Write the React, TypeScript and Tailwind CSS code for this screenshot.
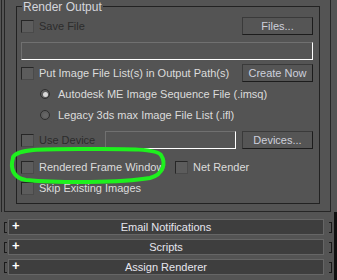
import React from "react";

function Check({ className = "" }: { className?: string }) {
  return (
    <div
      className={`w-[13px] h-[13px] shrink-0 border border-t-[#262626] border-l-[#262626] border-b-[#4a4a4a] border-r-[#4a4a4a] bg-[#5c5c5c] ${className}`}
    />
  );
}

function Radio({ on }: { on?: boolean }) {
  return (
    <div className="w-[10px] h-[10px] shrink-0 rounded-full border border-[#2e2e2e] bg-[#5e5e5e] flex items-center justify-center">
      {on ? <div className="w-[5px] h-[5px] rounded-full bg-[#d8d8d8]" /> : <div className="w-[5px] h-[5px] rounded-full bg-[#666]" />}
    </div>
  );
}

function Btn({ children, w }: { children: React.ReactNode; w: string }) {
  return (
    <div
      className={`${w} h-[18px] flex items-center justify-center border border-t-[#3a3a3a] border-l-[#3a3a3a] border-b-[#1c1c1c] border-r-[#1c1c1c] bg-[#555] text-[#cdd0dc] text-[11px]`}
    >
      {children}
    </div>
  );
}

function Rollout({ title }: { title: string }) {
  return (
    <div className="flex items-center h-[16px]">
      <div className="w-[4px]" />
      <div className="w-[3px] h-[11px] border border-r-0 border-[#1a1a1a]" />
      <div className="w-[1px]" />
      <div className="relative w-[316px] h-[16px] border border-[#666] bg-[#3e3e3e] flex items-center justify-center text-[#e6e6ee] text-[11px]">
        <span className="absolute left-[3px] top-[-1px] text-[13px] font-bold text-white">+</span>
        {title}
      </div>
      <div className="w-[5px]" />
      <div className="w-[3px] h-[11px] border border-l-0 border-[#1a1a1a]" />
    </div>
  );
}

export default function App() {
  return (
    <div
      className="relative w-[337px] h-[280px] bg-[#545454] overflow-hidden text-[11px] leading-none"
      style={{ fontFamily: "'Liberation Sans', Arial, sans-serif" }}
    >
      {/* top panel */}
      <div className="h-[212px] pl-[1px] flex">
        <div className="w-[336px] border-l border-[#262626] pl-[2px]">
          <div className="w-[327px] h-[212px] border-l border-b border-r border-[#262626] pl-[11px] pt-[6px]">
            <div className="relative w-[304px] h-[198px] border border-[#222] flex flex-col pl-[4px] pr-[6px]">
              <span className="absolute left-[5px] top-[-6px] bg-[#545454] px-[1px] text-[#d4d6dc] text-[12px]">
                Render Output
              </span>
              <div className="mt-[10px] h-[18px] flex items-center justify-between">
                <div className="flex items-center gap-[5px]">
                  <Check />
                  <span className="text-[#2c2c2c]">Save File</span>
                </div>
                <Btn w="w-[71px]">Files...</Btn>
              </div>
              <div className="mt-[7px] h-[18px] border border-t-[#707070] border-l-[#707070] border-b-white border-r-white" />
              <div className="mt-[4px] h-[18px] flex items-center justify-between">
                <div className="flex items-center gap-[5px]">
                  <Check />
                  <span className="text-[#dcdcdc]">Put Image File List(s) in Output Path(s)</span>
                </div>
                <Btn w="w-[71px]">Create Now</Btn>
              </div>
              <div className="mt-[3px] h-[18px] flex items-center gap-[8px] pl-[19px]">
                <Radio on />
                <span className="text-[#dcdcdc]">Autodesk ME Image Sequence File (.imsq)</span>
              </div>
              <div className="mt-[3px] h-[18px] flex items-center gap-[8px] pl-[19px]">
                <Radio />
                <span className="text-[#dcdcdc]">Legacy 3ds max Image File List (.ifl)</span>
              </div>
              <div className="mt-[7px] h-[18px] flex items-center">
                <Check />
                <span className="ml-[5px] text-[#2c2c2c] w-[66px]">Use Device</span>
                <div className="w-[131px] h-[18px] border border-t-[#707070] border-l-[#707070] border-b-white border-r-white" />
                <div className="ml-auto">
                  <Btn w="w-[71px]">Devices...</Btn>
                </div>
              </div>
              <div className="mt-[9px] h-[18px] flex items-center">
                <Check />
                <span className="ml-[5px] text-[#dcdcdc] w-[136px]">Rendered Frame Window</span>
                <Check />
                <span className="ml-[5px] text-[#dcdcdc]">Net Render</span>
              </div>
              <div className="mt-[3px] h-[18px] flex items-center gap-[5px]">
                <Check />
                <span className="text-[#dcdcdc]">Skip Existing Images</span>
              </div>
            </div>
          </div>
        </div>
      </div>

      {/* rollouts */}
      <div className="mt-[7px] flex flex-col gap-[4px]">
        <Rollout title="Email Notifications" />
        <Rollout title="Scripts" />
        <Rollout title="Assign Renderer" />
      </div>

      {/* right edge strip */}
      <div className="absolute right-0 top-[212px] w-[3px] h-[68px] bg-[#111]" />

      {/* green hand-drawn loop */}
      <svg className="absolute left-0 top-0 pointer-events-none" width="337" height="280">
        <path
          d="M 13 157 C 18 149, 40 149, 80 149 C 120 149, 156 148, 161 155 C 166 163, 164 174, 150 178 C 120 183, 60 183, 26 180 C 13 178, 10 168, 13 158"
          fill="none"
          stroke="#1ef01e"
          strokeWidth="4"
          strokeLinecap="round"
        />
      </svg>
    </div>
  );
}
